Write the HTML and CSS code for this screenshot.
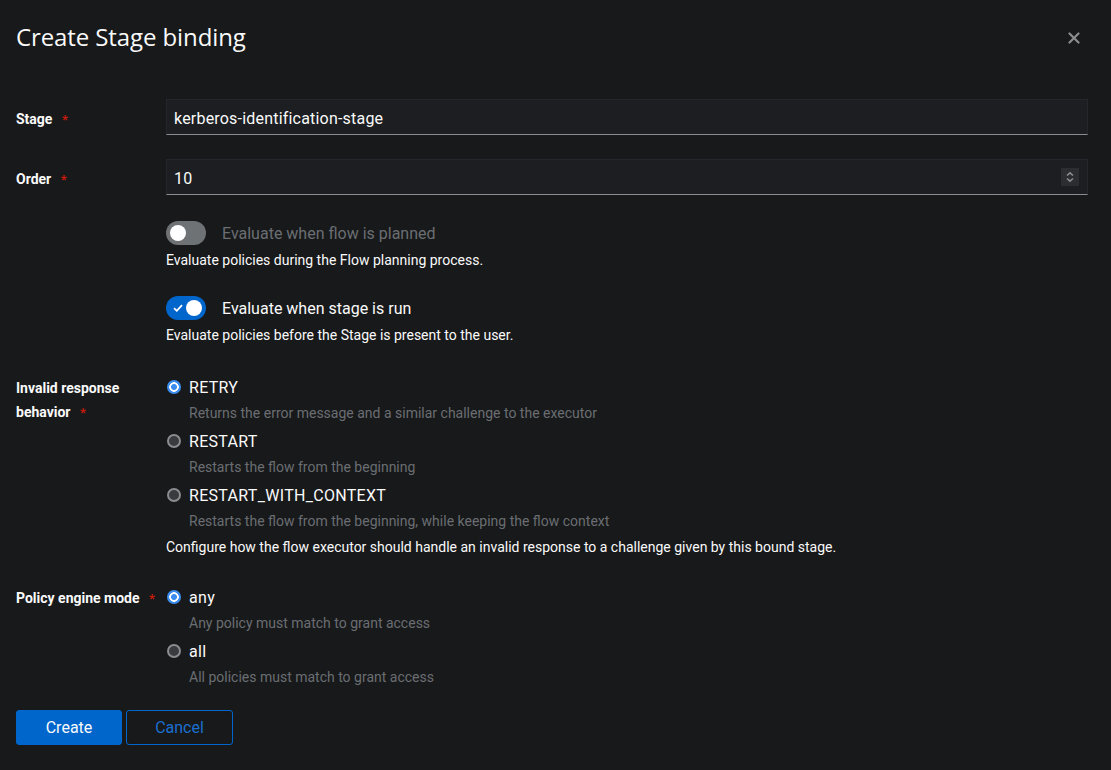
FILE: index.html
```html
<!DOCTYPE html>
<html lang="en">
<head>
<meta charset="utf-8">
<title>Create Stage binding</title>
<link rel="stylesheet" href="styles.css">
</head>
<body>
<div class="modal">
  <header class="modal-header">
    <h1 class="title">Create Stage binding</h1>
    <button class="close" type="button" aria-label="Close">
      <svg viewBox="0 0 12 12" width="12" height="12" aria-hidden="true"><path d="M1.5 1.5 L10.5 10.5 M10.5 1.5 L1.5 10.5" stroke="currentColor" stroke-width="2.2" stroke-linecap="round"/></svg>
    </button>
  </header>

  <form class="form">
    <div class="group g-stage">
      <div class="label">Stage <span class="req">*</span></div>
      <div class="control">
        <div class="input"><span class="input-text">kerberos-identification-stage</span></div>
      </div>
    </div>

    <div class="group g-order">
      <div class="label">Order <span class="req">*</span></div>
      <div class="control">
        <div class="input">
          <span class="input-text">10</span>
          <span class="spinner">
            <svg viewBox="0 0 18 18" width="18" height="18" aria-hidden="true"><path d="M6 7.5 L9 4.8 L12 7.5 M6 10.5 L9 13.2 L12 10.5" fill="none" stroke="currentColor" stroke-width="1.6"/></svg>
          </span>
        </div>
      </div>
    </div>

    <div class="group g-toggle1">
      <div class="label"></div>
      <div class="control">
        <div class="toggle-row">
          <span class="switch off"><span class="knob"></span></span>
          <span class="toggle-label muted">Evaluate when flow is planned</span>
        </div>
        <p class="helper">Evaluate policies during the Flow planning process.</p>
      </div>
    </div>

    <div class="group g-toggle2">
      <div class="label"></div>
      <div class="control">
        <div class="toggle-row">
          <span class="switch on">
            <svg class="check" viewBox="0 0 10 8" width="10" height="8" aria-hidden="true"><path d="M1 4.2 L3.8 6.8 L9 1.2" fill="none" stroke="#fff" stroke-width="1.8"/></svg>
            <span class="knob"></span>
          </span>
          <span class="toggle-label">Evaluate when stage is run</span>
        </div>
        <p class="helper">Evaluate policies before the Stage is present to the user.</p>
      </div>
    </div>

    <div class="group g-invalid">
      <div class="label label-stack"><span>Invalid response</span><span>behavior <span class="req">*</span></span></div>
      <div class="control">
        <div class="radio-list">
          <div class="radio">
            <div class="radio-row"><span class="dot checked"></span><span class="radio-label">RETRY</span></div>
            <div class="radio-desc">Returns the error message and a similar challenge to the executor</div>
          </div>
          <div class="radio">
            <div class="radio-row"><span class="dot"></span><span class="radio-label">RESTART</span></div>
            <div class="radio-desc">Restarts the flow from the beginning</div>
          </div>
          <div class="radio">
            <div class="radio-row"><span class="dot"></span><span class="radio-label">RESTART_WITH_CONTEXT</span></div>
            <div class="radio-desc">Restarts the flow from the beginning, while keeping the flow context</div>
          </div>
        </div>
        <p class="helper">Configure how the flow executor should handle an invalid response to a challenge given by this bound stage.</p>
      </div>
    </div>

    <div class="group g-policy">
      <div class="label">Policy engine mode <span class="req">*</span></div>
      <div class="control">
        <div class="radio-list">
          <div class="radio">
            <div class="radio-row"><span class="dot checked"></span><span class="radio-label">any</span></div>
            <div class="radio-desc">Any policy must match to grant access</div>
          </div>
          <div class="radio">
            <div class="radio-row"><span class="dot"></span><span class="radio-label">all</span></div>
            <div class="radio-desc">All policies must match to grant access</div>
          </div>
        </div>
      </div>
    </div>

    <div class="actions">
      <button type="button" class="btn btn-primary">Create</button>
      <button type="button" class="btn btn-secondary">Cancel</button>
    </div>
  </form>
</div>
</body>
</html>
```

FILE: styles.css
```css
* { box-sizing: border-box; }

html, body {
  margin: 0;
  padding: 0;
  background: #18191a;
  color: #fafafa;
  font-family: Roboto, "Open Sans", sans-serif;
}

.modal {
  width: 1111px;
  height: 770px;
  background: #18191a;
}

.modal-header {
  display: flex;
  justify-content: space-between;
  align-items: center;
  padding: 22px 25px 0 16px;
}

.title {
  margin: 0;
  font-family: "Open Sans", sans-serif;
  font-size: 24px;
  line-height: 29px;
  font-weight: 400;
  letter-spacing: -0.1px;
  color: #fafafa;
}

.close {
  width: 24px;
  height: 24px;
  margin-top: 3px;
  border: 0;
  padding: 0;
  background: transparent;
  color: #8a8d90;
  display: flex;
  align-items: center;
  justify-content: center;
}

.form {
  display: flex;
  flex-direction: column;
  margin: 48px 0 0 0;
  padding: 0 23px 0 16px;
}

.group {
  display: grid;
  grid-template-columns: 150px 1fr;
}

.label {
  font-size: 14px;
  line-height: 24px;
  font-weight: 700;
  color: #fafafa;
  padding-right: 2px;
}

.g-invalid .label,
.g-policy .label { padding-top: 1px; }

.label-stack {
  display: flex;
  flex-direction: column;
  align-items: flex-start;
}

.g-stage .label,
.g-order .label { padding-top: 8px; }

.req {
  color: #c9190b;
  font-weight: 700;
  font-size: 13px;
  margin-left: 6px;
}

.g-order { margin-top: 24px; }
.g-toggle1 { margin-top: 26px; }
.g-toggle2 { margin-top: 25px; }
.g-invalid { margin-top: 29px; }
.g-policy { margin-top: 27px; }

.input {
  height: 36px;
  display: flex;
  align-items: center;
  padding: 0 8px 0 7px;
  background: #1c1e21;
  border: 1px solid #23262a;
  border-bottom-color: #8a8d90;
  font-size: 16px;
  color: #fafafa;
}

.input-text {
  flex: 1;
  padding-top: 2px;
  letter-spacing: 0.2px;
}

.spinner {
  width: 18px;
  height: 18px;
  background: #2b2d31;
  color: #8a8d90;
  display: flex;
}

.toggle-row {
  display: flex;
  align-items: center;
  gap: 16px;
  height: 24px;
}

.switch {
  width: 40px;
  height: 24px;
  border-radius: 12px;
  display: flex;
  align-items: center;
  padding: 0 4px;
}

.switch .knob {
  width: 16px;
  height: 16px;
  border-radius: 50%;
  background: #fff;
}

.switch.off { background: #6f7275; }

.switch.on {
  background: #0066cc;
  justify-content: space-between;
  padding: 0 4px 0 7px;
}

.toggle-label {
  font-size: 16px;
  line-height: 24px;
  padding-top: 2px;
  color: #fafafa;
}

.muted { color: #6a6e73; }

.helper {
  margin: 5px 0 0 0;
  font-size: 14px;
  line-height: 21px;
  color: #fafafa;
}

.radio-list {
  display: flex;
  flex-direction: column;
  gap: 5px;
}

.radio-row {
  display: flex;
  align-items: center;
  height: 24px;
}

.dot {
  width: 14px;
  height: 14px;
  margin-left: 1px;
  border-radius: 50%;
  border: 2px solid #8b8b90;
  background: #3a3b3f;
}

.dot.checked {
  border: 0;
  background: radial-gradient(circle, #3b8ef0 0 2.7px, #ffffff 3.2px 4.5px, #3b8ef0 5px);
}

.radio-label {
  margin-left: 8px;
  font-size: 16px;
  line-height: 24px;
  padding-top: 2px;
  letter-spacing: 0.3px;
  color: #fafafa;
}

.radio-desc {
  margin: 4px 0 0 23px;
  font-size: 14px;
  line-height: 21px;
  color: #6a6e73;
}

.actions {
  display: flex;
  gap: 4px;
  margin-top: 22px;
}

.btn {
  height: 35px;
  padding: 0;
  font-family: inherit;
  font-size: 16px;
  border-radius: 3px;
  cursor: pointer;
}

.btn-primary {
  width: 106px;
  background: #0066cc;
  border: 1px solid #0066cc;
  color: #fafafa;
}

.btn-secondary {
  width: 107px;
  background: transparent;
  border: 1px solid #0066cc;
  color: #1a6fd0;
}
```
